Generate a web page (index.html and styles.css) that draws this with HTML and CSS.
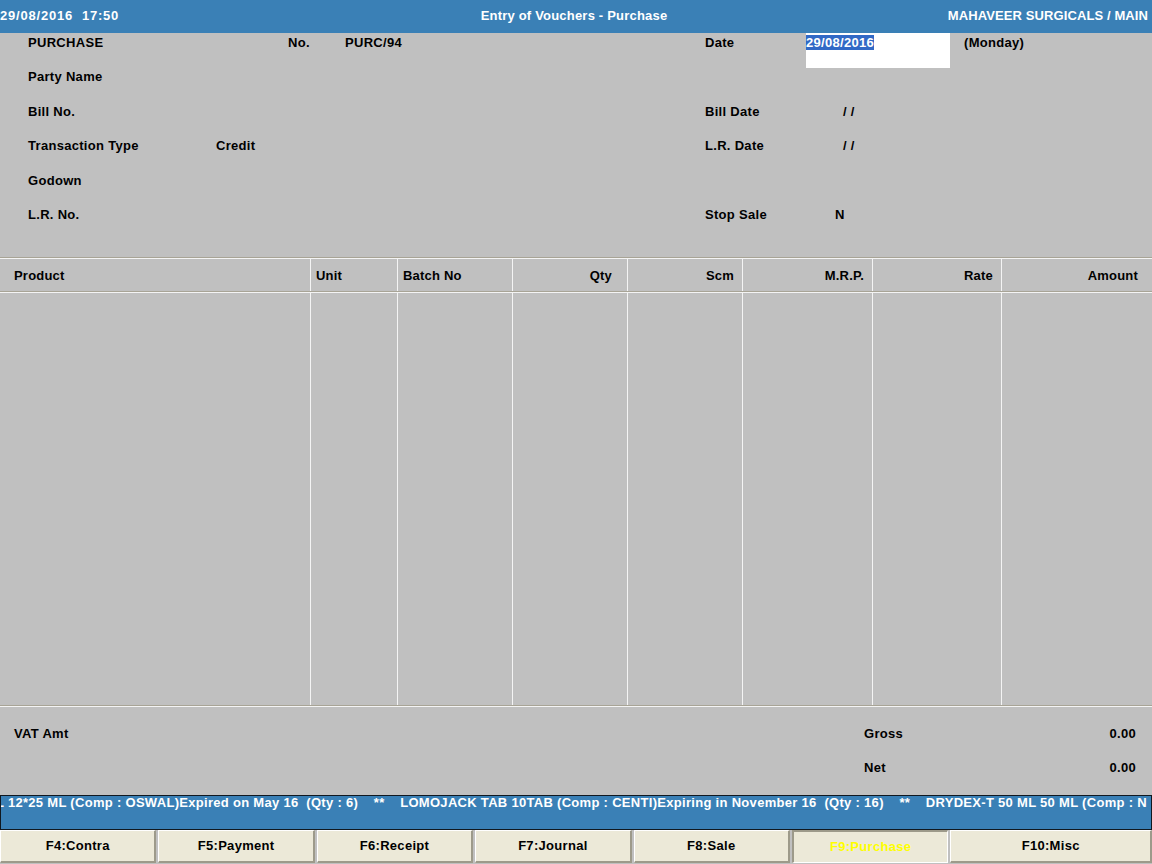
FILE: index.html
```html
<!DOCTYPE html>
<html>
<head>
<meta charset="utf-8">
<link rel="stylesheet" href="styles.css">
</head>
<body>
<div class="app">
  <header class="titlebar">
    <span class="tb-left">29/08/2016  17:50</span>
    <span class="tb-center">Entry of Vouchers - Purchase</span>
    <span class="tb-right">MAHAVEER SURGICALS / MAIN</span>
  </header>

  <section class="form">
    <div class="c1">PURCHASE</div><div class="c2"></div><div class="c3">No.</div><div class="c4">PURC/94</div><div class="c5">Date</div><div class="c6"><div class="datebox"><span class="sel">29/08/2016</span></div></div><div class="c7">(Monday)</div>
    <div class="c1">Party Name</div><div class="c2"></div><div class="c3"></div><div class="c4"></div><div class="c5"></div><div class="c6"></div><div class="c7"></div>
    <div class="c1">Bill No.</div><div class="c2"></div><div class="c3"></div><div class="c4"></div><div class="c5">Bill Date</div><div class="c6"><span class="slash">/ /</span></div><div class="c7"></div>
    <div class="c1">Transaction Type</div><div class="c2">Credit</div><div class="c3"></div><div class="c4"></div><div class="c5">L.R. Date</div><div class="c6"><span class="slash">/ /</span></div><div class="c7"></div>
    <div class="c1">Godown</div><div class="c2"></div><div class="c3"></div><div class="c4"></div><div class="c5"></div><div class="c6"></div><div class="c7"></div>
    <div class="c1">L.R. No.</div><div class="c2"></div><div class="c3"></div><div class="c4"></div><div class="c5">Stop Sale</div><div class="c6"><span class="stop">N</span></div><div class="c7"></div>
  </section>

  <section class="grid">
    <div class="grid-head">
      <div class="col w-prod">Product</div>
      <div class="col w-unit">Unit</div>
      <div class="col w-batch">Batch No</div>
      <div class="col w-qty r">Qty</div>
      <div class="col w-scm r">Scm</div>
      <div class="col w-mrp r">M.R.P.</div>
      <div class="col w-rate r">Rate</div>
      <div class="col w-amt r">Amount</div>
    </div>
    <div class="grid-body">
      <div class="col w-prod"></div>
      <div class="col w-unit"></div>
      <div class="col w-batch"></div>
      <div class="col w-qty"></div>
      <div class="col w-scm"></div>
      <div class="col w-mrp"></div>
      <div class="col w-rate"></div>
      <div class="col w-amt"></div>
    </div>
  </section>

  <section class="totals">
    <div class="tot-left">VAT Amt</div>
    <div class="tot-right">
      <div class="tot-row"><span>Gross</span><span>0.00</span></div>
      <div class="tot-row"><span>Net</span><span>0.00</span></div>
    </div>
  </section>

  <div class="ticker"><span class="ticker-text">L 12*25 ML (Comp : OSWAL)Expired on May 16  (Qty : 6)    **    LOMOJACK TAB 10TAB (Comp : CENTI)Expiring in November 16  (Qty : 16)    **    DRYDEX-T 50 ML 50 ML (Comp : N</span></div>

  <nav class="fkeys">
    <div class="fkey">F4:Contra</div>
    <div class="fkey">F5:Payment</div>
    <div class="fkey">F6:Receipt</div>
    <div class="fkey">F7:Journal</div>
    <div class="fkey">F8:Sale</div>
    <div class="fkey active">F9:Purchase</div>
    <div class="fkey last">F10:Misc</div>
  </nav>
</div>
</body>
</html>
```

FILE: styles.css
```css
html, body {
  margin: 0;
  padding: 0;
}
body {
  width: 1152px;
  height: 864px;
  overflow: hidden;
  background: #c0c0c0;
  font-family: "Liberation Sans", Arial, sans-serif;
  font-weight: bold;
  font-size: 13px;
  letter-spacing: 0.3px;
  color: #000;
}
.app {
  display: flex;
  flex-direction: column;
  height: 864px;
}
.titlebar {
  height: 33px;
  background: #3a80b6;
  color: #fff;
  display: flex;
  align-items: flex-start;
  padding-top: 8px;
  box-sizing: border-box;
  white-space: pre;
  letter-spacing: 0.2px;
}
.tb-left { flex: 1; letter-spacing: 0.8px; }
.tb-center { flex: 0 0 auto; }
.tb-right { flex: 1; text-align: right; padding-right: 4px; letter-spacing: 0.1px; }

.form {
  display: grid;
  grid-template-columns: 188px 72px 57px 360px 101px 158px 1fr;
  grid-auto-rows: 34.4px;
  padding-left: 28px;
  height: 224px;
  box-sizing: border-box;
}
.form > div {
  padding-top: 2px;
  line-height: 15px;
  white-space: nowrap;
}
.form .c6 { padding-top: 0; }
.datebox {
  width: 144px;
  height: 35px;
  background: #fff;
  box-sizing: border-box;
  padding-top: 2px;
  line-height: 15px;
}
.sel {
  background: #3169c6;
  color: #fff;
}
.slash { padding-left: 37px; display: inline-block; padding-top: 2px; }
.stop { padding-left: 29px; display: inline-block; padding-top: 2px; }

.grid {
  display: flex;
  flex-direction: column;
  border-top: 1px solid #a8a496;
  height: 448px;
}
.grid-head, .grid-body {
  display: flex;
}
.grid-head {
  height: 34px;
  border-top: 1px solid #f4f4f4;
  border-bottom: 1px solid #a8a496;
  box-sizing: border-box;
  align-items: stretch;
}
.grid-body {
  flex: 1;
  border-top: 1px solid #f4f4f4;
  border-bottom: 1px solid #a8a496;
}
.col {
  box-sizing: border-box;
  border-left: 1px solid #f4f4f4;
  padding: 9px 8px 0 5px;
  line-height: 15px;
  letter-spacing: 0.2px;
}
.col.r { text-align: right; }
.grid-head .w-prod { padding-left: 14px; }
.w-prod { width: 310px; border-left: none; }
.w-unit { width: 87px; }
.w-batch { width: 115px; }
.w-qty { width: 115px; padding-right: 15px !important; }
.w-scm { width: 115px; }
.w-mrp { width: 130px; }
.w-rate { width: 129px; }
.w-amt { flex: 1; padding-right: 14px !important; }

.totals {
  display: flex;
  justify-content: space-between;
  height: 89px;
  border-top: 1px solid #f4f4f4;
  box-sizing: border-box;
  padding-top: 19px;
}
.tot-left { padding-left: 14px; line-height: 15px; }
.tot-right {
  width: 272px;
  margin-right: 16px;
  display: flex;
  flex-direction: column;
  gap: 19px;
}
.tot-row {
  display: flex;
  justify-content: space-between;
  line-height: 15px;
}

.ticker {
  height: 35px;
  background: #3a80b6;
  border: 1px solid #101820;
  box-sizing: border-box;
  color: #fff;
  overflow: hidden;
  white-space: pre;
  line-height: 14px;
  letter-spacing: 0.3px;
}
.ticker-text {
  display: block;
  margin-left: -5px;
}

.fkeys {
  display: flex;
  height: 34px;
  gap: 2px;
  background: #c0c0c0;
}
.fkey {
  width: 156.4px;
  flex: 0 0 auto;
  box-sizing: border-box;
  background: #ece9d8;
  border-top: 1px solid #fff;
  border-left: 1px solid #fff;
  border-right: 2px solid #9d9a8a;
  border-bottom: 2px solid #9d9a8a;
  text-align: center;
  line-height: 15px;
  padding-top: 7px;
  height: 33px;
}
.fkey.active {
  color: #ffff00;
  border-top: 2px solid #9d9a8a;
  border-left: 2px solid #9d9a8a;
  border-right: 1px solid #fff;
  border-bottom: 1px solid #fff;
}
.fkey.last { flex: 1; }
```
